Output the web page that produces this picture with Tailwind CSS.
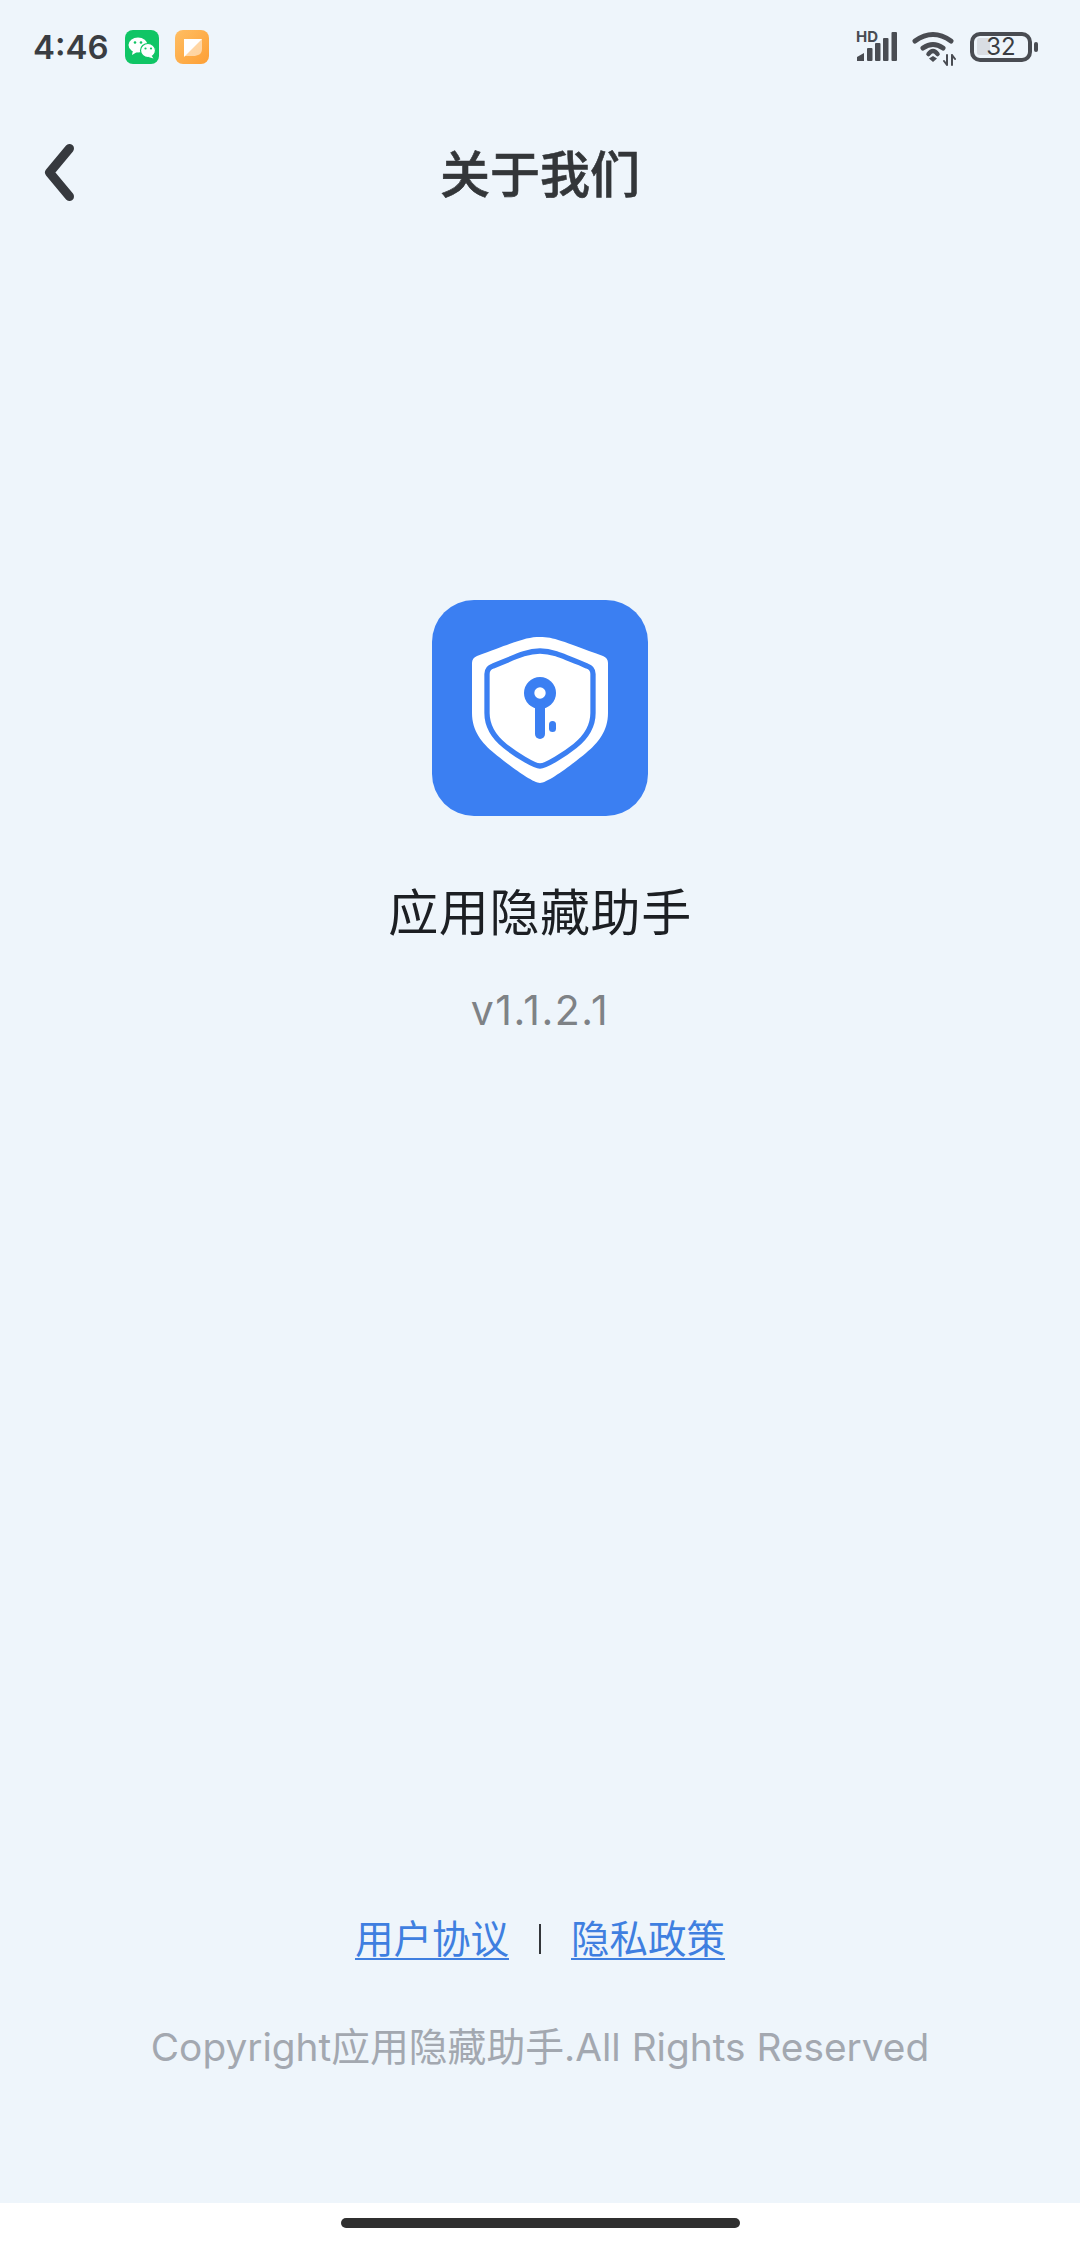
<!DOCTYPE html>
<html lang="zh-CN">
<head>
<meta charset="UTF-8">
<meta name="viewport" content="width=device-width, initial-scale=1.0">
<title>关于我们</title>
<script src="https://cdn.jsdelivr.net/npm/@tailwindcss/browser@4"></script>
</head>
<body class="bg-white font-['Inter','Noto_Sans_CJK_SC',sans-serif]">
<div class="w-[1080px] h-[2248px] flex flex-col overflow-hidden">
  <div class="h-[2203px] bg-[#eef5fb] flex flex-col">

    <!-- status bar -->
    <div class="h-[94px] flex items-start justify-between pt-[30px] pl-[33px] pr-[42px]">
      <div class="flex items-center h-[34px]">
        <span class="w-[74px] text-[33px] leading-[34px] font-semibold text-[#3a3d42] whitespace-nowrap">4:46</span>
        <svg class="w-[34px] h-[34px] ml-[18px]" viewBox="0 0 34 34">
          <rect width="34" height="34" rx="8" fill="#10c565"/>
          <ellipse cx="13" cy="15" rx="9.500" ry="7.500" fill="#fff"/>
          <path d="M8 20l-1 5 5-3z" fill="#fff"/>
          <ellipse cx="23" cy="20.500" rx="7.500" ry="7" fill="#fff" stroke="#10c565" stroke-width="1.200"/>
          <path d="M26 25l2.500 3.500-5-1.500z" fill="#fff"/>
          <circle cx="10" cy="12.500" r="1.300" fill="#10c565"/>
          <circle cx="16" cy="12.500" r="1.300" fill="#10c565"/>
          <circle cx="20.500" cy="18.500" r="1.100" fill="#10c565"/>
          <circle cx="26" cy="18.500" r="1.100" fill="#10c565"/>
        </svg>
        <svg class="w-[34px] h-[34px] ml-[16px]" viewBox="0 0 34 34">
          <defs>
            <linearGradient id="orangeBg" x1="0" y1="0" x2="1" y2="1">
              <stop offset="0" stop-color="#ffbe63"/>
              <stop offset="1" stop-color="#fd9f35"/>
            </linearGradient>
          </defs>
          <rect width="34" height="34" rx="8" fill="url(#orangeBg)"/>
          <path d="M9 9h18v10c0 5-4 7-9 7h-9z" fill="#fff" fill-opacity=".5"/>
          <path d="M9 9h18L9 27z" fill="#fff"/>
        </svg>
      </div>
      <div class="flex items-start">
        <div class="relative w-[42px] h-[30px]">
          <span class="absolute left-0 top-[1px] text-[15px] leading-[11px] font-bold text-[#494c52]">HD</span>
          <svg class="absolute left-0 top-0 w-[42px] h-[32px]" viewBox="0 0 42 32">
            <path d="M1 31v-4l7-4v8z" fill="#494c52"/>
            <rect x="11" y="18" width="5.500" height="13" rx="1" fill="#494c52"/>
            <rect x="19" y="13" width="5.500" height="18" rx="1" fill="#494c52"/>
            <rect x="27" y="8" width="5.500" height="23" rx="1" fill="#494c52"/>
            <rect x="35.500" y="2" width="5.500" height="29" rx="1" fill="#494c52"/>
          </svg>
        </div>
        <svg class="w-[46px] h-[36px] ml-[14px]" viewBox="0 0 46 36" fill="none" stroke="#494c52" stroke-linecap="round">
          <path d="M3 11Q21-2 39 11" stroke-width="5"/>
          <path d="M11 18Q21 11 31 18" stroke-width="5"/>
          <path d="M16.500 24Q21 18 25.500 24" stroke-width="4.500"/>
          <path d="M17 28.500l4-2.500 4 2.500-4 3.500z" fill="#494c52" stroke="none"/>
          <path d="M35 25v10M32 31l3 4M40 25v10M40 25l3 4" stroke-width="2"/>
        </svg>
        <div class="relative w-[62px] h-[30px] ml-[12px] mt-[2px] border-[4px] border-[#494c52] rounded-[10px] flex items-center justify-center">
          <div class="absolute left-[3px] top-[2px] w-[13px] h-[17px] bg-[#d9dde3] rounded-[2px]"></div>
          <span class="relative text-[24px] leading-[24px] font-normal text-[#3a3d42]">32</span>
        </div>
        <div class="w-[4px] h-[10px] mt-[12px] ml-[2px] bg-[#494c52] rounded-full"></div>
      </div>
    </div>

    <!-- header -->
    <div class="relative h-[158px] flex items-start justify-center">
      <svg class="absolute left-[40px] top-[48px] w-[40px] h-[61px]" viewBox="0 0 40 61" fill="none">
        <path d="M29.500 6.500L9.500 30.500l20 24" stroke="#36393e" stroke-width="9" stroke-linecap="round" stroke-linejoin="round"/>
      </svg>
      <h1 class="mt-[53px] text-[50px] leading-[56px] font-medium [-webkit-text-stroke:0.6px_#333639] text-[#333639]">关于我们</h1>
    </div>

    <!-- logo + name -->
    <div class="flex flex-col items-center mt-[348px]">
      <svg class="w-[216px] h-[216px]" viewBox="0 0 216 216">
        <rect width="216" height="216" rx="42" fill="#3b7ff2"/>
        <path d="M108 37c14 0 22 4 63 19q5 2 5 7v50c0 18-10 30-22 40-12 10-38 30-46 30s-34-20-46-30c-12-10-22-22-22-40V63q0-5 5-7c41-15 49-19 63-19z" fill="#fff"/>
        <path d="M108 51c11 0 18 3 47 15q6 2 6 8v39c0 14-8 25-18 33-10 8-29 20-35 20s-25-12-35-20c-10-8-18-19-18-33V74q0-6 6-8c29-12 36-15 47-15z" fill="none" stroke="#3b7ff2" stroke-width="5.300"/>
        <circle cx="108" cy="93" r="16" fill="#3b7ff2"/>
        <circle cx="108" cy="93" r="5.700" fill="#fff"/>
        <rect x="103" y="100" width="10" height="39" rx="5" fill="#3b7ff2"/>
        <rect x="117" y="121" width="7" height="11" rx="3.500" fill="#3b7ff2"/>
      </svg>
      <h2 class="mt-[62px] text-[50px] leading-[70px] text-[#1c1f23] tracking-[0.6px]">应用隐藏助手</h2>
      <p class="mt-[37px] text-[41px] leading-[50px] tracking-[1.500px] text-[#7e8286]">v1.1.2.1</p>
    </div>

    <!-- links + copyright -->
    <div class="mt-auto pb-[129px] flex flex-col items-center">
      <div class="flex items-center text-[38.500px] leading-[54px] text-[#3f7fe0]">
        <a class="underline underline-offset-[5px] decoration-[2px]" href="#">用户协议</a>
        <span class="w-[2px] h-[30px] mx-[30px] bg-[#33363a]"></span>
        <a class="underline underline-offset-[5px] decoration-[2px]" href="#">隐私政策</a>
      </div>
      <p class="mt-[54px] text-[38.800px] leading-[54px] text-[#a3a8b0] whitespace-nowrap">Copyright应用隐藏助手.All Rights Reserved</p>
    </div>
  </div>

  <!-- nav bar -->
  <div class="flex-1 bg-white flex justify-center pt-[15px]">
    <div class="w-[399px] h-[10px] bg-[#2f2f2f] rounded-full"></div>
  </div>
</div>
</body>
</html>
